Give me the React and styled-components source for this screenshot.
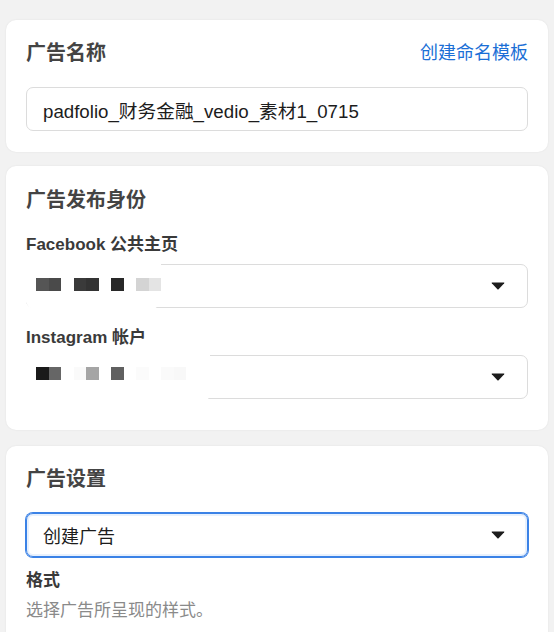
import React from "react";
import styled, { createGlobalStyle } from "styled-components";

const Global = createGlobalStyle`
  html, body { margin: 0; padding: 0; background: #f2f2f2; }
  body { font-family: "Liberation Sans", "Noto Sans CJK SC", sans-serif; -webkit-font-smoothing: antialiased; }
`;

const Page = styled.div`
  display: flex;
  flex-direction: column;
  gap: 14px;
  padding: 20px 6px 0;
  height: 632px;
  box-sizing: border-box;
  overflow: hidden;
`;

const Card = styled.section`
  background: #fff;
  border-radius: 10px;
  box-shadow: 0 0 2px rgba(0,0,0,0.08);
  padding: ${p => p.$pad || "22px 20px 21px"};
  margin-top: ${p => p.$mt || 0}px;
  display: flex;
  flex-direction: column;
  flex-shrink: 0;
`;

const HeaderRow = styled.div`
  display: flex;
  justify-content: space-between;
  align-items: center;
`;

const Title = styled.h2`
  margin: 0;
  font-size: 20px;
  line-height: 22px;
  font-weight: 700;
  color: #444;
`;

const Link = styled.a`
  font-size: 18px;
  line-height: 22px;
  color: #1b6fd6;
  text-decoration: none;
`;

const Label = styled.div`
  font-size: 17px;
  line-height: 20px;
  font-weight: 700;
  color: #3a3a3a;
  margin-top: ${p => p.$mt || 0}px;
`;

const Desc = styled.div`
  font-size: 17px;
  line-height: 20px;
  color: #8a8a8a;
  margin-top: 10px;
`;

const Field = styled.div`
  position: relative;
  height: 44px;
  box-sizing: border-box;
  border: 1px solid ${p => (p.$focus ? "#3b82e6" : "#dcdcdc")};
  box-shadow: ${p => (p.$focus ? "0 0 0 1px #3b82e6, inset 0 0 0 2px #e8f1fd" : "none")};
  border-radius: 7px;
  display: flex;
  align-items: center;
  padding: 0 22px 0 16px;
  margin-top: ${p => p.$mt || 0}px;
  font-size: ${p => p.$fs || 18}px;
  color: #1c1c1c;
`;

const Value = styled.span`
  flex: 1;
`;

const Caret = styled.svg`
  width: 14px;
  height: 8px;
  flex-shrink: 0;
`;

const Mask = styled.div`
  position: absolute;
  left: -2px;
  top: ${p => p.$top}px;
  width: ${p => p.$w}px;
  height: ${p => p.$h}px;
  background: #fff;
  border-radius: 0 0 14px 14px;
  display: flex;
  align-items: flex-start;
  padding-left: 11px;
  padding-top: ${p => p.$pt}px;
  box-sizing: border-box;
`;

const Pixels = styled.div`
  display: flex;
`;

const Pixel = styled.span`
  width: ${p => p.$w || 12.5}px;
  height: 13px;
  background: ${p => p.$c};
`;

const Arrow = () => (
  <Caret viewBox="0 0 14 8">
    <path d="M1 0.5 H13 Q13.6 0.6 13.2 1.2 L7.6 7.3 Q7 7.8 6.4 7.3 L0.8 1.2 Q0.4 0.6 1 0.5 Z" fill="#1c1c1c" />
  </Caret>
);

const fbPixels = ["#555", "#4a4a4a", "#fff", "#3a3a3a", "#333", "#fff", "#282828", "#fff", "#d4d4d4", "#e4e4e4"];
const igPixels = ["#1a1a1a", "#666", "#fff", "#fafafa", "#a5a5a5", "#fff", "#606060", "#fff", "#fbfbfb", "#fff", "#fafafa", "#f8f8f8"];

export default function App() {
  return (
    <>
      <Global />
      <Page>
        <Card>
          <HeaderRow>
            <Title>广告名称</Title>
            <Link>创建命名模板</Link>
          </HeaderRow>
          <Field $mt={23} $fs={18.7}>
            <Value>padfolio_财务金融_vedio_素材1_0715</Value>
          </Field>
        </Card>

        <Card $pad="23px 20px 31px">
          <Title>广告发布身份</Title>
          <Label $mt={24}>Facebook 公共主页</Label>
          <Field $mt={9}>
            <Value />
            <Arrow />
            <Mask $top={-2} $w={136} $h={48} $pt={15}>
              <Pixels>
                {fbPixels.map((c, i) => (
                  <Pixel key={i} $c={c} />
                ))}
              </Pixels>
            </Mask>
          </Field>
          <Label $mt={20}>Instagram 帐户</Label>
          <Field $mt={7}>
            <Value />
            <Arrow />
            <Mask $top={-4} $w={185} $h={54} $pt={15}>
              <Pixels>
                {igPixels.map((c, i) => (
                  <Pixel key={i} $c={c} />
                ))}
              </Pixels>
            </Mask>
          </Field>
        </Card>

        <Card $pad="22px 20px 30px" $mt={2}>
          <Title>广告设置</Title>
          <Field $mt={23} $focus>
            <Value>创建广告</Value>
            <Arrow />
          </Field>
          <Label $mt={14}>格式</Label>
          <Desc>选择广告所呈现的样式。</Desc>
        </Card>
      </Page>
    </>
  );
}
